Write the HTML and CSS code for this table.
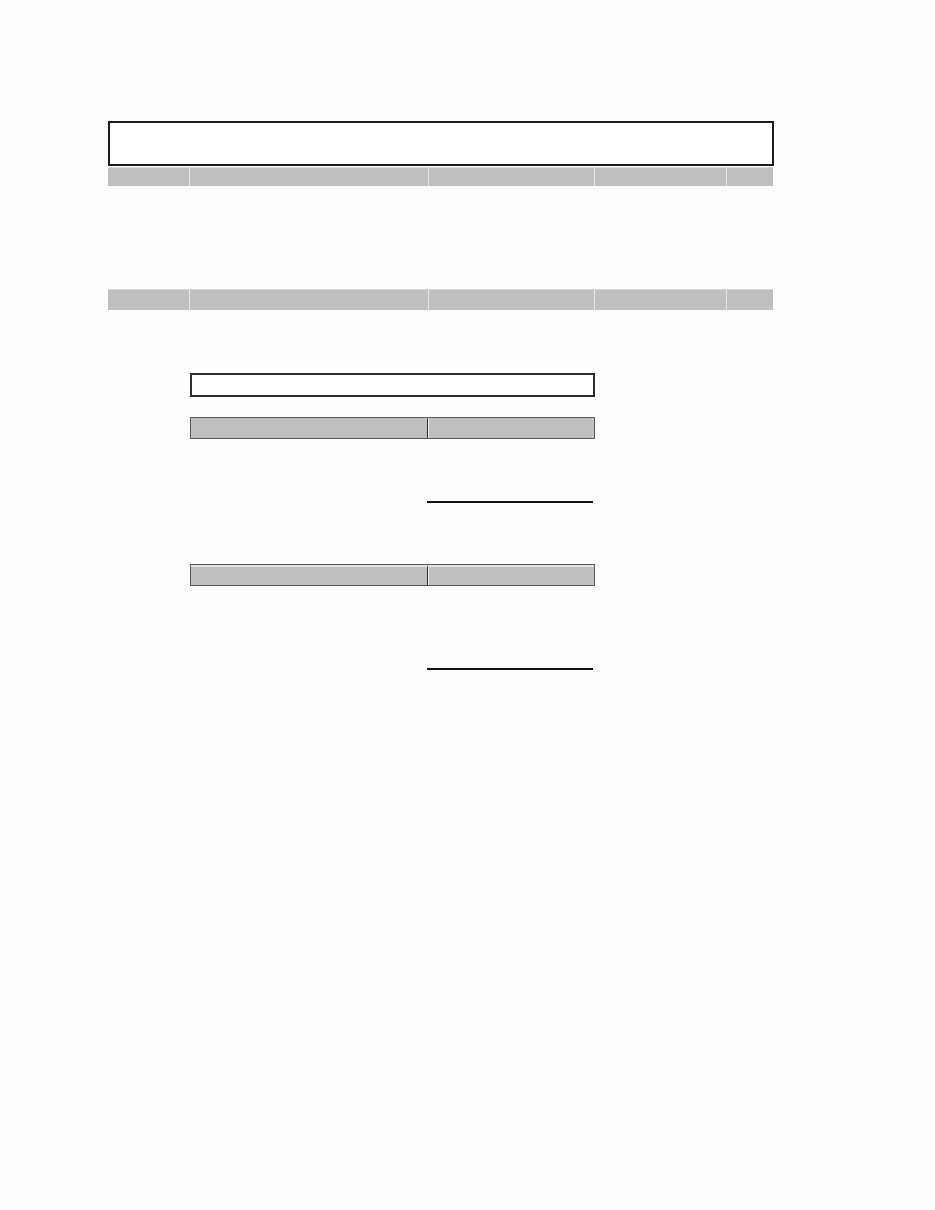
FILE: index.html
```html
<!DOCTYPE html>
<html>
<head>
<meta charset="utf-8">
<link rel="stylesheet" href="styles.css">
</head>
<body>
<div class="page">
  <section class="sec-top">
    <div class="box box-top"></div>
    <div class="bar bar-five bar-a">
      <div class="cell"></div><div class="cell"></div><div class="cell"></div><div class="cell"></div><div class="cell"></div>
    </div>
    <div class="bar bar-five bar-b">
      <div class="cell"></div><div class="cell"></div><div class="cell"></div><div class="cell"></div><div class="cell"></div>
    </div>
  </section>
  <section class="sec-mid">
    <div class="box box-mid"></div>
    <div class="bar bar-two bar-c">
      <div class="cell cell-l"></div><div class="cell cell-r"></div>
    </div>
    <div class="rule rule-a"></div>
    <div class="bar bar-two bar-d">
      <div class="cell cell-l"></div><div class="cell cell-r"></div>
    </div>
    <div class="rule rule-b"></div>
  </section>
</div>
</body>
</html>
```
FILE: styles.css
```css
html, body {
  margin: 0;
  padding: 0;
  background: #fdfdfd;
  font-family: "Liberation Sans", Arial, sans-serif;
}
.page {
  padding-top: 121px;
  height: 1210px;
  box-sizing: border-box;
}
.sec-top {
  margin-left: 108px;
  width: 666px;
}
.box {
  box-sizing: border-box;
  background: #ffffff;
}
.box-top {
  height: 45px;
  border: 2px solid #1c1c1c;
}
.bar-five {
  display: grid;
  grid-template-columns: 81px 238px 165px 131px 1fr;
  column-gap: 1px;
  background: #e6e6e6;
  width: 665px;
}
.bar-five .cell {
  background: #bfbfbf;
  border-top: 1px solid #d4d4d4;
}
.bar-a {
  margin-top: 1px;
  height: 19px;
}
.bar-b {
  margin-top: 103px;
  height: 21px;
}
.sec-mid {
  margin-left: 190px;
  width: 405px;
  margin-top: 63px;
}
.box-mid {
  height: 24px;
  border: 2px solid #2e2e2e;
}
.bar-two {
  display: grid;
  grid-template-columns: 237px 1fr;
  height: 22px;
  box-sizing: border-box;
  border: 1px solid #5a5a5a;
  background: #bfbfbf;
}
.bar-two .cell {
  border-top: 1px solid #d6d6d6;
}
.bar-two .cell-l {
  border-right: 1px solid #333333;
}
.bar-two .cell-r {
  border-left: 1px solid #e8e8e8;
}
.bar-c {
  margin-top: 20px;
}
.bar-c .cell {
  border-top-color: #bfbfbf;
}
.bar-d {
  margin-top: 61px;
}
.bar-d .cell {
  border-top: 2px solid #e4e4e4;
}
.rule {
  margin-left: 237px;
  width: 166px;
  height: 2px;
  background: #111111;
}
.rule-a {
  margin-top: 62px;
}
.rule-b {
  margin-top: 82px;
}
```
